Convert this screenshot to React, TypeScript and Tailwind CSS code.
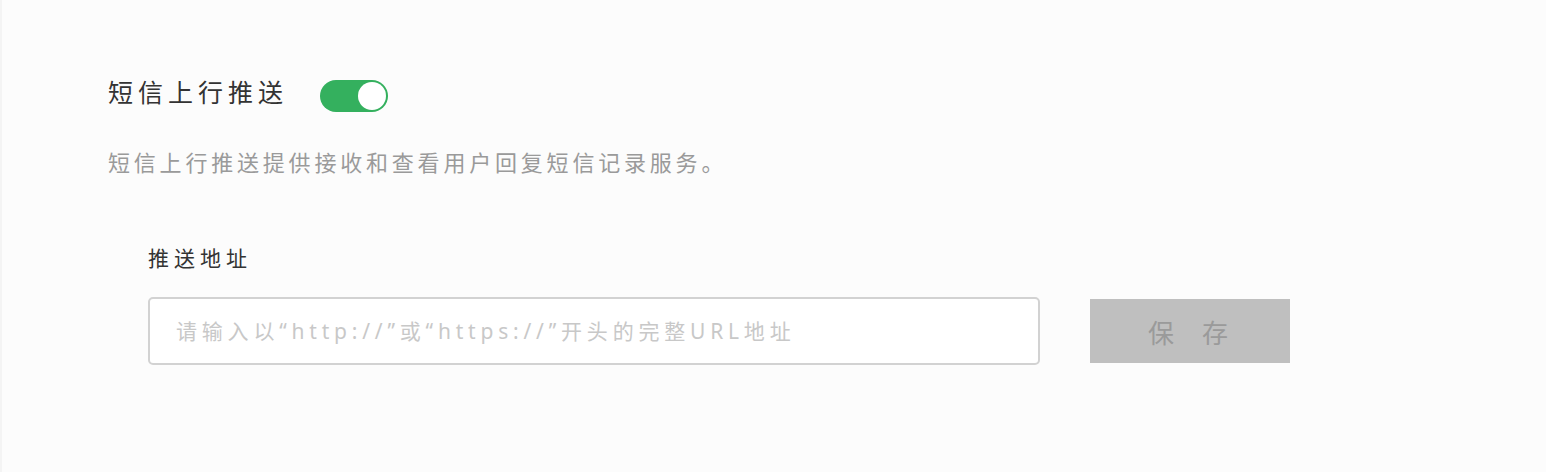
import { useState } from 'react'

const font = { fontFamily: '"Noto Sans CJK SC", "Noto Sans", sans-serif' }
const inputFont = { fontFamily: '"Noto Sans", "Noto Sans CJK SC", sans-serif' }

export default function App() {
  const [enabled, setEnabled] = useState(true)
  const [url, setUrl] = useState('')

  return (
    <div
      className="min-h-screen h-[472px] bg-[#fcfcfc] border-l-2 border-[#f4f4f4] pl-[106px] pt-[75px]"
      style={font}
    >
      {/* header */}
      <div className="flex items-start">
        <h2 className="text-[25px] leading-[32px] tracking-[5px] text-[#333] font-normal">短信上行推送</h2>
        <button
          type="button"
          onClick={() => setEnabled(!enabled)}
          className={`ml-[32px] mt-[5px] w-[68px] h-[32px] rounded-full p-[2px] flex items-center transition-colors ${
            enabled ? 'bg-[#34b05e] justify-end' : 'bg-[#d9d9d9] justify-start'
          }`}
        >
          <span className="w-[28px] h-[28px] rounded-full bg-white" />
        </button>
      </div>

      <p className="mt-[35px] text-[22px] leading-[28px] tracking-[3.8px] text-[#9a9a9a]">
        短信上行推送提供接收和查看用户回复短信记录服务。
      </p>

      {/* push url */}
      <div className="ml-[40px] mt-[68px]">
        <div className="text-[21px] leading-[28px] tracking-[5px] text-[#333]">推送地址</div>
        <div className="mt-[26px] flex items-center">
          <input
            type="text"
            value={url}
            onChange={(e) => setUrl(e.target.value)}
            placeholder="请输入以“http://”或“https://”开头的完整URL地址"
            className="w-[892px] h-[68px] bg-white border-2 border-[#d2d2d2] rounded-[5px] pl-[26px] text-[21px] tracking-[4.8px] text-[#333] placeholder:text-[#c8c8c8] outline-none"
            style={inputFont}
          />
          <button
            type="button"
            disabled={!url.trim()}
            className="ml-[50px] w-[200px] h-[64px] bg-[#bfbfbf] flex items-center justify-center gap-[28px] pr-[4px] text-[26px] text-[#9a9a9a]"
          >
            <span>保</span>
            <span>存</span>
          </button>
        </div>
      </div>
    </div>
  )
}
